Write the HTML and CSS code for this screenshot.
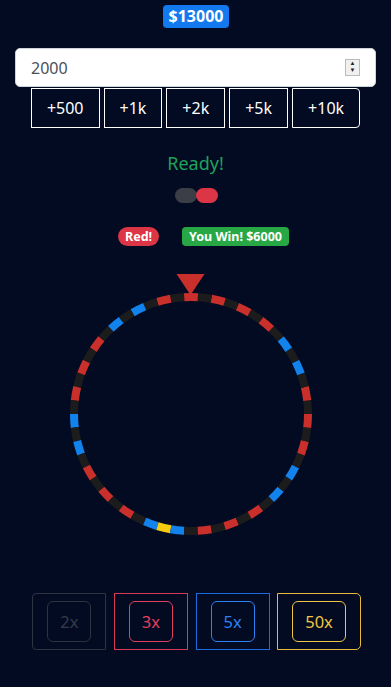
FILE: index.html
```html
<!DOCTYPE html>
<html lang="en">
  <head>
    <meta charset="utf-8">
    <title>wheel</title>
    <link rel="stylesheet" href="styles.css">
  </head>
  <body>

    <div class="top">
      <span class="balance">$13000</span>
    </div>

    <div class="bet">
      <span class="bet-value">2000</span>
      <span class="spinner"><span>▲</span><span>▼</span></span>
    </div>

    <div class="quick">
      <button>+500</button>
      <button>+1k</button>
      <button>+2k</button>
      <button>+5k</button>
      <button>+10k</button>
    </div>

    <div class="status">Ready!</div>

    <div class="toggle">
      <span class="pill off"></span>
      <span class="pill on"></span>
    </div>

    <div class="results">
      <span class="tag red">Red!</span>
      <span class="tag win">You Win! $6000</span>
    </div>

    <div class="wheel">
      <svg id="wheel" width="250" height="270" viewBox="0 0 250 270">
        <polygon points="110.5,4 138.5,4 124.5,25" fill="#c9302c"></polygon>
      </svg>
    </div>

    <div class="choices">
      <div class="choice gray"><span>2x</span></div>
      <div class="choice red"><span>3x</span></div>
      <div class="choice blue"><span>5x</span></div>
      <div class="choice gold"><span>50x</span></div>
    </div>

    <script>
      const colors = { R: '#c9302c', D: '#1c1c1c', B: '#1282ec', Y: '#f5cb10' }
      const slots = 'RDRDRDRDBDBDRDRDRDBDBDRDRDRDBYBDRDRDRDBDBDRDRDRDBDBDRD'
      const svg = document.querySelector('#wheel')
      const cx = 125
      const cy = 144
      const r = 117
      const step = 360 / slots.length

      function point (deg) {
        const a = deg * Math.PI / 180
        return `${(cx + r * Math.sin(a)).toFixed(2)} ${(cy - r * Math.cos(a)).toFixed(2)}`
      }

      slots.split('').forEach((s, i) => {
        const p = document.createElementNS('http://www.w3.org/2000/svg', 'path')
        const a0 = (i - 0.5) * step
        const a1 = (i + 0.5) * step
        p.setAttribute('d', `M ${point(a0)} A ${r} ${r} 0 0 1 ${point(a1)}`)
        p.setAttribute('stroke', colors[s])
        p.setAttribute('stroke-width', 8)
        p.setAttribute('fill', 'none')
        svg.insertBefore(p, svg.firstChild)
      })
    </script>

  </body>
</html>
```

FILE: styles.css
```css
* { box-sizing: border-box; }

body {
  margin: 0;
  background-color: #020b22;
  font-family: 'Noto Sans', 'Open Sans', sans-serif;
  color: #fff;
}

.top {
  display: flex;
  justify-content: center;
  padding-top: 5px;
  padding-left: 1px;
}

.balance {
  background-color: #1379ef;
  border-radius: 4px;
  padding: 0 6px;
  height: 23px;
  line-height: 23px;
  font-size: 16px;
  font-weight: 700;
}

.bet {
  display: flex;
  align-items: center;
  justify-content: space-between;
  margin: 20px 15px 0;
  height: 39px;
  padding: 0 15px;
  background-color: #fff;
  border-radius: 5px;
  border: 1px solid #ced4da;
}

.bet-value {
  color: #495057;
  font-size: 16px;
}

.spinner {
  display: flex;
  flex-direction: column;
  width: 15px;
  height: 17px;
  border: 1px solid #bbb;
  background-color: #f0f0f0;
  font-size: 6px;
  line-height: 7px;
  text-align: center;
  color: #222;
}

.quick {
  display: flex;
  justify-content: center;
  gap: 4px;
  margin-top: 1px;
}

.quick button {
  height: 40px;
  padding: 0 15px;
  background: none;
  border: 1px solid #fff;
  border-radius: 0;
  color: #fff;
  font-family: inherit;
  font-size: 16px;
}

.quick button:last-child {
  border-radius: 0 4px 4px 0;
}

.status {
  margin-top: 22px;
  text-align: center;
  font-size: 18px;
  line-height: 26px;
  color: #1fa35c;
}

.toggle {
  display: flex;
  justify-content: center;
  margin-top: 12px;
  padding-left: 1px;
}

.pill {
  width: 22px;
  height: 15px;
  border-radius: 8px;
}

.pill.off { background-color: #3b3e46; }
.pill.on { background-color: #dc3545; margin-left: -1px; }

.results {
  display: flex;
  justify-content: center;
  gap: 23px;
  margin-top: 24px;
  padding-left: 16px;
}

.tag {
  height: 19px;
  line-height: 19px;
  font-size: 12.5px;
  font-weight: 700;
  padding: 0 7px;
}

.tag.red {
  background-color: #dc3545;
  border-radius: 10px;
}

.tag.win {
  background-color: #28a745;
  border-radius: 4px;
}

.wheel {
  display: flex;
  justify-content: center;
  margin-top: 24px;
  padding-right: 10px;
}

.choices {
  display: flex;
  justify-content: center;
  gap: 7.5px;
  margin-top: 53px;
  padding-left: 2px;
}

.choice {
  padding: 7px 14px;
  border: 1px solid;
}

.choice span {
  display: block;
  height: 41px;
  line-height: 39px;
  padding: 0 12px;
  border: 1px solid;
  border-radius: 6px;
  font-size: 16.5px;
  text-align: center;
}

.choice.gray { border-color: #2d3340; color: #353b47; border-radius: 4px 0 0 4px; }
.choice.gray span { border-color: #2d3340; }
.choice.red { border-color: #d63a58; color: #e0405c; }
.choice.blue { border-color: #1c6ee0; color: #2f80f0; }
.choice.gold { border-color: #e7b93c; color: #f0c544; border-radius: 0 5px 5px 0; }
```
